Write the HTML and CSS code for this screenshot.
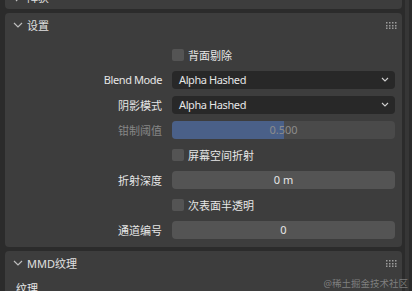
FILE: index.html
```html
<!DOCTYPE html>
<html lang="zh">
<head>
<meta charset="utf-8">
<link rel="stylesheet" href="styles.css">
</head>
<body>
<div class="app">
  <div class="main">
    <section class="panel panel-top">
      <div class="panel-head">
        <svg class="chev" width="10" height="10" viewBox="0 0 10 10"><path d="M3 1 L7 5 L3 9" fill="none" stroke="#bdbdbd" stroke-width="1.2"/></svg>
        <span class="title">阵获</span>
      </div>
    </section>

    <section class="panel">
      <div class="panel-head">
        <svg class="chev" width="10" height="10" viewBox="0 0 10 10"><path d="M1 3 L5 7 L9 3" fill="none" stroke="#bdbdbd" stroke-width="1.2"/></svg>
        <span class="title">设置</span>
        <svg class="grip" width="11" height="7" viewBox="0 0 11 7"><g fill="#9c9c9c"><rect x="0" y="0" width="1.5" height="1.5"/><rect x="3" y="0" width="1.5" height="1.5"/><rect x="6" y="0" width="1.5" height="1.5"/><rect x="9" y="0" width="1.5" height="1.5"/><rect x="0" y="3" width="1.5" height="1.5"/><rect x="3" y="3" width="1.5" height="1.5"/><rect x="6" y="3" width="1.5" height="1.5"/><rect x="9" y="3" width="1.5" height="1.5"/><rect x="0" y="5.5" width="1.5" height="1.5"/><rect x="3" y="5.5" width="1.5" height="1.5"/><rect x="6" y="5.5" width="1.5" height="1.5"/><rect x="9" y="5.5" width="1.5" height="1.5"/></g></svg>
      </div>
      <div class="panel-body">
        <div class="row">
          <span class="label"></span>
          <label class="check"><span class="box"></span><span>背面剔除</span></label>
        </div>
        <div class="row">
          <span class="label latin">Blend Mode</span>
          <div class="field menu"><span class="latin">Alpha Hashed</span><svg width="8" height="5" viewBox="0 0 8 5"><path d="M1 1 L4 4 L7 1" fill="none" stroke="#d0d0d0" stroke-width="1.1"/></svg></div>
        </div>
        <div class="row">
          <span class="label">阴影模式</span>
          <div class="field menu"><span class="latin">Alpha Hashed</span><svg width="8" height="5" viewBox="0 0 8 5"><path d="M1 1 L4 4 L7 1" fill="none" stroke="#d0d0d0" stroke-width="1.1"/></svg></div>
        </div>
        <div class="row">
          <span class="label dim">钳制阈值</span>
          <div class="field slider"><div class="fill" style="width:50%"></div><span class="val">0.500</span></div>
        </div>
        <div class="row">
          <span class="label"></span>
          <label class="check"><span class="box"></span><span>屏幕空间折射</span></label>
        </div>
        <div class="row">
          <span class="label">折射深度</span>
          <div class="field num"><span>0 m</span></div>
        </div>
        <div class="row">
          <span class="label"></span>
          <label class="check"><span class="box"></span><span>次表面半透明</span></label>
        </div>
        <div class="row">
          <span class="label">通道编号</span>
          <div class="field num"><span>0</span></div>
        </div>
      </div>
    </section>

    <section class="panel">
      <div class="panel-head">
        <svg class="chev" width="10" height="10" viewBox="0 0 10 10"><path d="M1 3 L5 7 L9 3" fill="none" stroke="#bdbdbd" stroke-width="1.2"/></svg>
        <span class="title">MMD纹理</span>
        <svg class="grip" width="11" height="7" viewBox="0 0 11 7"><g fill="#9c9c9c"><rect x="0" y="0" width="1.5" height="1.5"/><rect x="3" y="0" width="1.5" height="1.5"/><rect x="6" y="0" width="1.5" height="1.5"/><rect x="9" y="0" width="1.5" height="1.5"/><rect x="0" y="3" width="1.5" height="1.5"/><rect x="3" y="3" width="1.5" height="1.5"/><rect x="6" y="3" width="1.5" height="1.5"/><rect x="9" y="3" width="1.5" height="1.5"/><rect x="0" y="5.5" width="1.5" height="1.5"/><rect x="3" y="5.5" width="1.5" height="1.5"/><rect x="6" y="5.5" width="1.5" height="1.5"/><rect x="9" y="5.5" width="1.5" height="1.5"/></g></svg>
      </div>
      <div class="panel-body sub">
        <div class="subtitle">纹理</div>
      </div>
    </section>
  </div>
  <div class="scroll"><div class="track"></div></div>
</div>
<div class="watermark">@稀土掘金技术社区</div>
</body>
</html>
```

FILE: styles.css
```css
html, body {
  margin: 0;
  padding: 0;
  height: 100%;
  overflow: hidden;
  background: #2b2b2b;
  font-family: "Noto Sans", "Noto Sans CJK SC", sans-serif;
  font-size: 11px;
  color: #e6e6e6;
}
.app {
  display: flex;
  height: 100%;
  padding-left: 5px;
}
.main {
  width: 397px;
  display: flex;
  flex-direction: column;
  gap: 4px;
}
.scroll {
  width: 10px;
  padding-left: 3px;
  box-sizing: border-box;
}
.track {
  width: 4px;
  height: 100%;
  background: #363636;
}
.panel {
  background: #3d3d3d;
  border-radius: 4px;
  flex-shrink: 0;
}
.panel-top {
  margin-top: -15px;
}
.panel-head {
  height: 24px;
  display: flex;
  align-items: center;
  padding-left: 8px;
  padding-right: 5px;
}
.chev {
  width: 10px;
  height: 10px;
  margin-right: 4px;
}
.title {
  flex: 1;
  color: #e0e0e0;
}
.panel-body {
  padding: 8px 7px 8px 0;
  display: flex;
  flex-direction: column;
  gap: 6px;
}
.panel-body.sub {
  padding: 5px 0 0 11px;
}
.subtitle {
  height: 18px;
  line-height: 18px;
}
.row {
  display: grid;
  grid-template-columns: 157px 1fr;
  column-gap: 10px;
  height: 19px;
  align-items: center;
}
.label {
  text-align: right;
  white-space: nowrap;
}
.latin {
  letter-spacing: -0.4px;
}
.label.dim {
  color: #868686;
}
.check {
  display: flex;
  align-items: center;
  gap: 4px;
}
.box {
  width: 12px;
  height: 12px;
  border-radius: 2px;
  background: #545454;
}
.field {
  height: 18px;
  border-radius: 4px;
  box-sizing: border-box;
  position: relative;
  display: flex;
  align-items: center;
}
.menu {
  background: #282828;
  padding: 0 6px 0 7px;
  justify-content: space-between;
}
.num {
  background: #545454;
  justify-content: center;
}
.slider {
  background: #4a4a4a;
  justify-content: center;
  overflow: hidden;
}
.fill {
  position: absolute;
  left: 0;
  top: 0;
  bottom: 0;
  background: #4a6088;
}
.val {
  position: relative;
  color: #8c8c8c;
}
.watermark {
  position: absolute;
  right: 4px;
  bottom: 1px;
  font-size: 9.5px;
  color: rgba(210, 210, 210, 0.45);
}
```
